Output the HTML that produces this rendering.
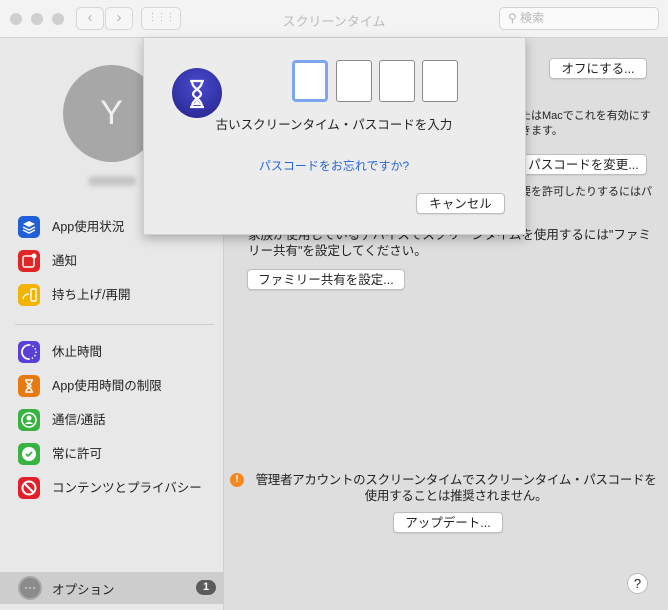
<!DOCTYPE html>
<html><head><meta charset="utf-8"><style>
*{margin:0;padding:0;box-sizing:border-box}
body{width:668px;height:610px;overflow:hidden;background:#dedede;font-family:"Liberation Sans","Noto Sans CJK JP",sans-serif;font-size:12.5px;color:#222;position:relative}
.a{position:absolute}
.tb{left:0;top:0;width:668px;height:38px;background:#f3f3f3;border-bottom:1px solid #d2d2d2}
.dot{width:12px;height:12px;border-radius:50%;background:#cfcfcf;top:13px}
.nb{top:7px;height:23px;border:1px solid #d6d6d6;border-radius:5px;background:#f6f6f6;color:#b5b5b5;font-size:15px;text-align:center;line-height:20px}
.side{left:0;top:38px;width:224px;height:572px;background:#e8e8e8;border-right:1px solid #d0d0d0}
.it{left:18px;height:22px;width:200px;line-height:22px}
.ic{position:absolute;left:0;top:0;width:22px;height:22px;border-radius:5px;color:#fff;text-align:center;line-height:22px;font-size:13px;font-weight:bold}
.ic svg{position:absolute;left:0;top:0}
.it span{position:absolute;left:34px;top:0;font-size:12.5px}
.btn{background:#fff;border:1px solid #bdbdbd;border-radius:4px;height:21px;line-height:21px;text-align:center;font-size:12.5px;box-shadow:0 1px 1px rgba(0,0,0,.08)}
.box{top:60px;width:36px;height:42px;border:1px solid #8a8a8a;border-radius:3px;background:#fff}
</style></head><body>
<div class="a tb"></div>
<div class="a dot" style="left:10px"></div><div class="a dot" style="left:31px"></div><div class="a dot" style="left:52px"></div>
<div class="a nb" style="left:76px;width:28px">‹</div>
<div class="a nb" style="left:105px;width:28px">›</div>
<div class="a nb" style="left:141px;width:40px;font-size:10px;letter-spacing:-1px">⋮⋮⋮</div>
<div class="a" style="left:0;width:668px;top:11px;text-align:center;color:#bcbcbc;font-size:13px">スクリーンタイム</div>
<div class="a" style="left:499px;top:7px;width:160px;height:23px;border:1px solid #d3d3d3;border-radius:5px;background:#fafafa;color:#b8b8b8;font-size:12px;line-height:21px;padding-left:8px">⚲ 検索</div>

<div class="a side"></div>
<div class="a" style="left:63px;top:65px;width:97px;height:97px;border-radius:50%;background:#a7a7a7;color:#eee;font-size:34px;text-align:center;line-height:97px">Y</div>
<div class="a" style="left:88px;top:176px;width:48px;height:10px;background:#c6c6c6;border-radius:5px;filter:blur(2px)"></div>

<div class="a it" style="top:216px"><div class="ic" style="background:#1f5fd8"><svg width="22" height="22"><path d="M11 5l6 3-6 3-6-3z" fill="#fff"/><path d="M5 11l6 3 6-3M5 14l6 3 6-3" stroke="#fff" stroke-width="1.5" fill="none"/></svg></div><span>App使用状況</span></div>
<div class="a it" style="top:250px"><div class="ic" style="background:#e02525"><svg width="22" height="22"><rect x="5" y="6" width="11" height="11" rx="2" stroke="#fff" stroke-width="1.5" fill="none"/><circle cx="16" cy="6" r="2.5" fill="#fff"/></svg></div><span>通知</span></div>
<div class="a it" style="top:284px"><div class="ic" style="background:#f2b400"><svg width="22" height="22"><rect x="13" y="5" width="5" height="12" rx="1" stroke="#fff" stroke-width="1.4" fill="none"/><path d="M5 15c1-4 3-5 6-5" stroke="#fff" stroke-width="1.4" fill="none"/></svg></div><span>持ち上げ/再開</span></div>
<div class="a" style="left:15px;top:324px;width:199px;height:1px;background:#cfcfcf"></div>
<div class="a it" style="top:341px"><div class="ic" style="background:#5a3fd8"><svg width="22" height="22"><path d="M11 4a7 7 0 0 0 0 14" stroke="#fff" stroke-width="1.8" fill="none"/><path d="M11 4a7 7 0 0 1 0 14" stroke="#fff" stroke-width="1.5" stroke-dasharray="1.5 2" fill="none"/></svg></div><span>休止時間</span></div>
<div class="a it" style="top:375px"><div class="ic" style="background:#e77a10"><svg width="22" height="22"><path d="M7 5h8M7 17h8M8 5c0 4 5 5 5 6s-5 2-5 6M14 5c0 4-5 5-5 6s5 2 5 6" stroke="#fff" stroke-width="1.5" fill="none"/></svg></div><span>App使用時間の制限</span></div>
<div class="a it" style="top:409px"><div class="ic" style="background:#38b240"><svg width="22" height="22"><circle cx="11" cy="11" r="7" stroke="#fff" stroke-width="1.5" fill="none"/><circle cx="11" cy="9" r="2.5" fill="#fff"/><path d="M7 15c2-3 6-3 8 0" fill="#fff"/></svg></div><span>通信/通話</span></div>
<div class="a it" style="top:443px"><div class="ic" style="background:#38b240"><svg width="22" height="22"><circle cx="11" cy="11" r="7" fill="#fff"/><path d="M8 11l2 2 4-4" stroke="#38b240" stroke-width="1.8" fill="none"/></svg></div><span>常に許可</span></div>
<div class="a it" style="top:477px"><div class="ic" style="background:#e0212b"><svg width="22" height="22"><circle cx="11" cy="11" r="6.5" stroke="#fff" stroke-width="2" fill="none"/><path d="M6.5 6.5l9 9" stroke="#fff" stroke-width="2"/></svg></div><span>コンテンツとプライバシー</span></div>
<div class="a" style="left:0;top:572px;width:224px;height:32px;background:#cdcdcd"></div>
<div class="a" style="left:18px;top:576px;width:24px;height:24px;border-radius:50%;background:#8b8b8b;border:2px solid #a8a8a8;color:#fff;text-align:center;line-height:18px;font-size:12px">···</div>
<div class="a" style="left:52px;top:579px">オプション</div>
<div class="a" style="left:196px;top:580px;width:20px;height:15px;border-radius:8px;background:#5b5b5b;color:#fff;font-size:11px;text-align:center;line-height:15px;font-weight:bold">1</div>

<div class="a btn" style="left:549px;top:58px;width:98px">オフにする...</div>
<div class="a" style="left:520px;top:109px;font-size:11px;line-height:15px">たはMacでこれを有効にす<br>きます。</div>
<div class="a btn" style="left:520px;top:154px;width:127px">パスコードを変更...</div>
<div class="a" style="left:520px;top:183px;font-size:11px">要を許可したりするにはパ</div>
<div class="a" style="left:248px;top:227px;line-height:16px;width:410px">家族が使用しているデバイスでスクリーンタイムを使用するには"ファミリー共有"を設定してください。</div>
<div class="a btn" style="left:247px;top:269px;width:158px">ファミリー共有を設定...</div>
<div class="a" style="left:230px;top:473px;width:14px;height:14px;border-radius:50%;background:#f5871f;color:#fff;font-size:10px;text-align:center;line-height:14px;font-weight:bold">!</div>
<div class="a" style="left:246px;top:472px;width:420px;text-align:center;line-height:16px;letter-spacing:-0.3px">管理者アカウントのスクリーンタイムでスクリーンタイム・パスコードを<br>使用することは推奨されません。</div>
<div class="a btn" style="left:393px;top:512px;width:110px">アップデート...</div>
<div class="a" style="left:627px;top:573px;width:21px;height:21px;border-radius:50%;background:#fff;border:1px solid #bbb;text-align:center;line-height:19px;font-size:13px">?</div>

<div class="a" style="left:143px;top:38px;width:383px;height:197px;background:#ececec;box-shadow:0 4px 10px rgba(0,0,0,.25);border:1px solid #cfcfcf;border-top:none"></div>
<div class="a" style="left:172px;top:68px;width:50px;height:50px;border-radius:50%;background:radial-gradient(circle at 50% 35%,#4a4ad0,#24238a)"></div>
<svg class="a" style="left:186px;top:78px" width="22" height="32" viewBox="0 0 22 32"><path d="M4 3h14M4 29h14M6 3c0 8 9 9 9 13s-9 5-9 13M16 3c0 8-9 9-9 13s9 5 9 13" stroke="#fff" stroke-width="2.2" fill="none"/><path d="M7 27l4-5 4 5z" fill="#fff"/></svg>
<div class="a box" style="left:292px;border:3px solid #7ca7f0;border-radius:4px"></div>
<div class="a box" style="left:336px"></div>
<div class="a box" style="left:379px"></div>
<div class="a box" style="left:422px"></div>
<div class="a" style="left:143px;width:382px;top:114px;text-align:center;font-size:12.5px">古いスクリーンタイム・パスコードを入力</div>
<div class="a" style="left:143px;width:382px;top:157px;text-align:center;color:#2668d6;font-size:12px">パスコードをお忘れですか?</div>
<div class="a btn" style="left:416px;top:193px;width:89px">キャンセル</div>
</body></html>
